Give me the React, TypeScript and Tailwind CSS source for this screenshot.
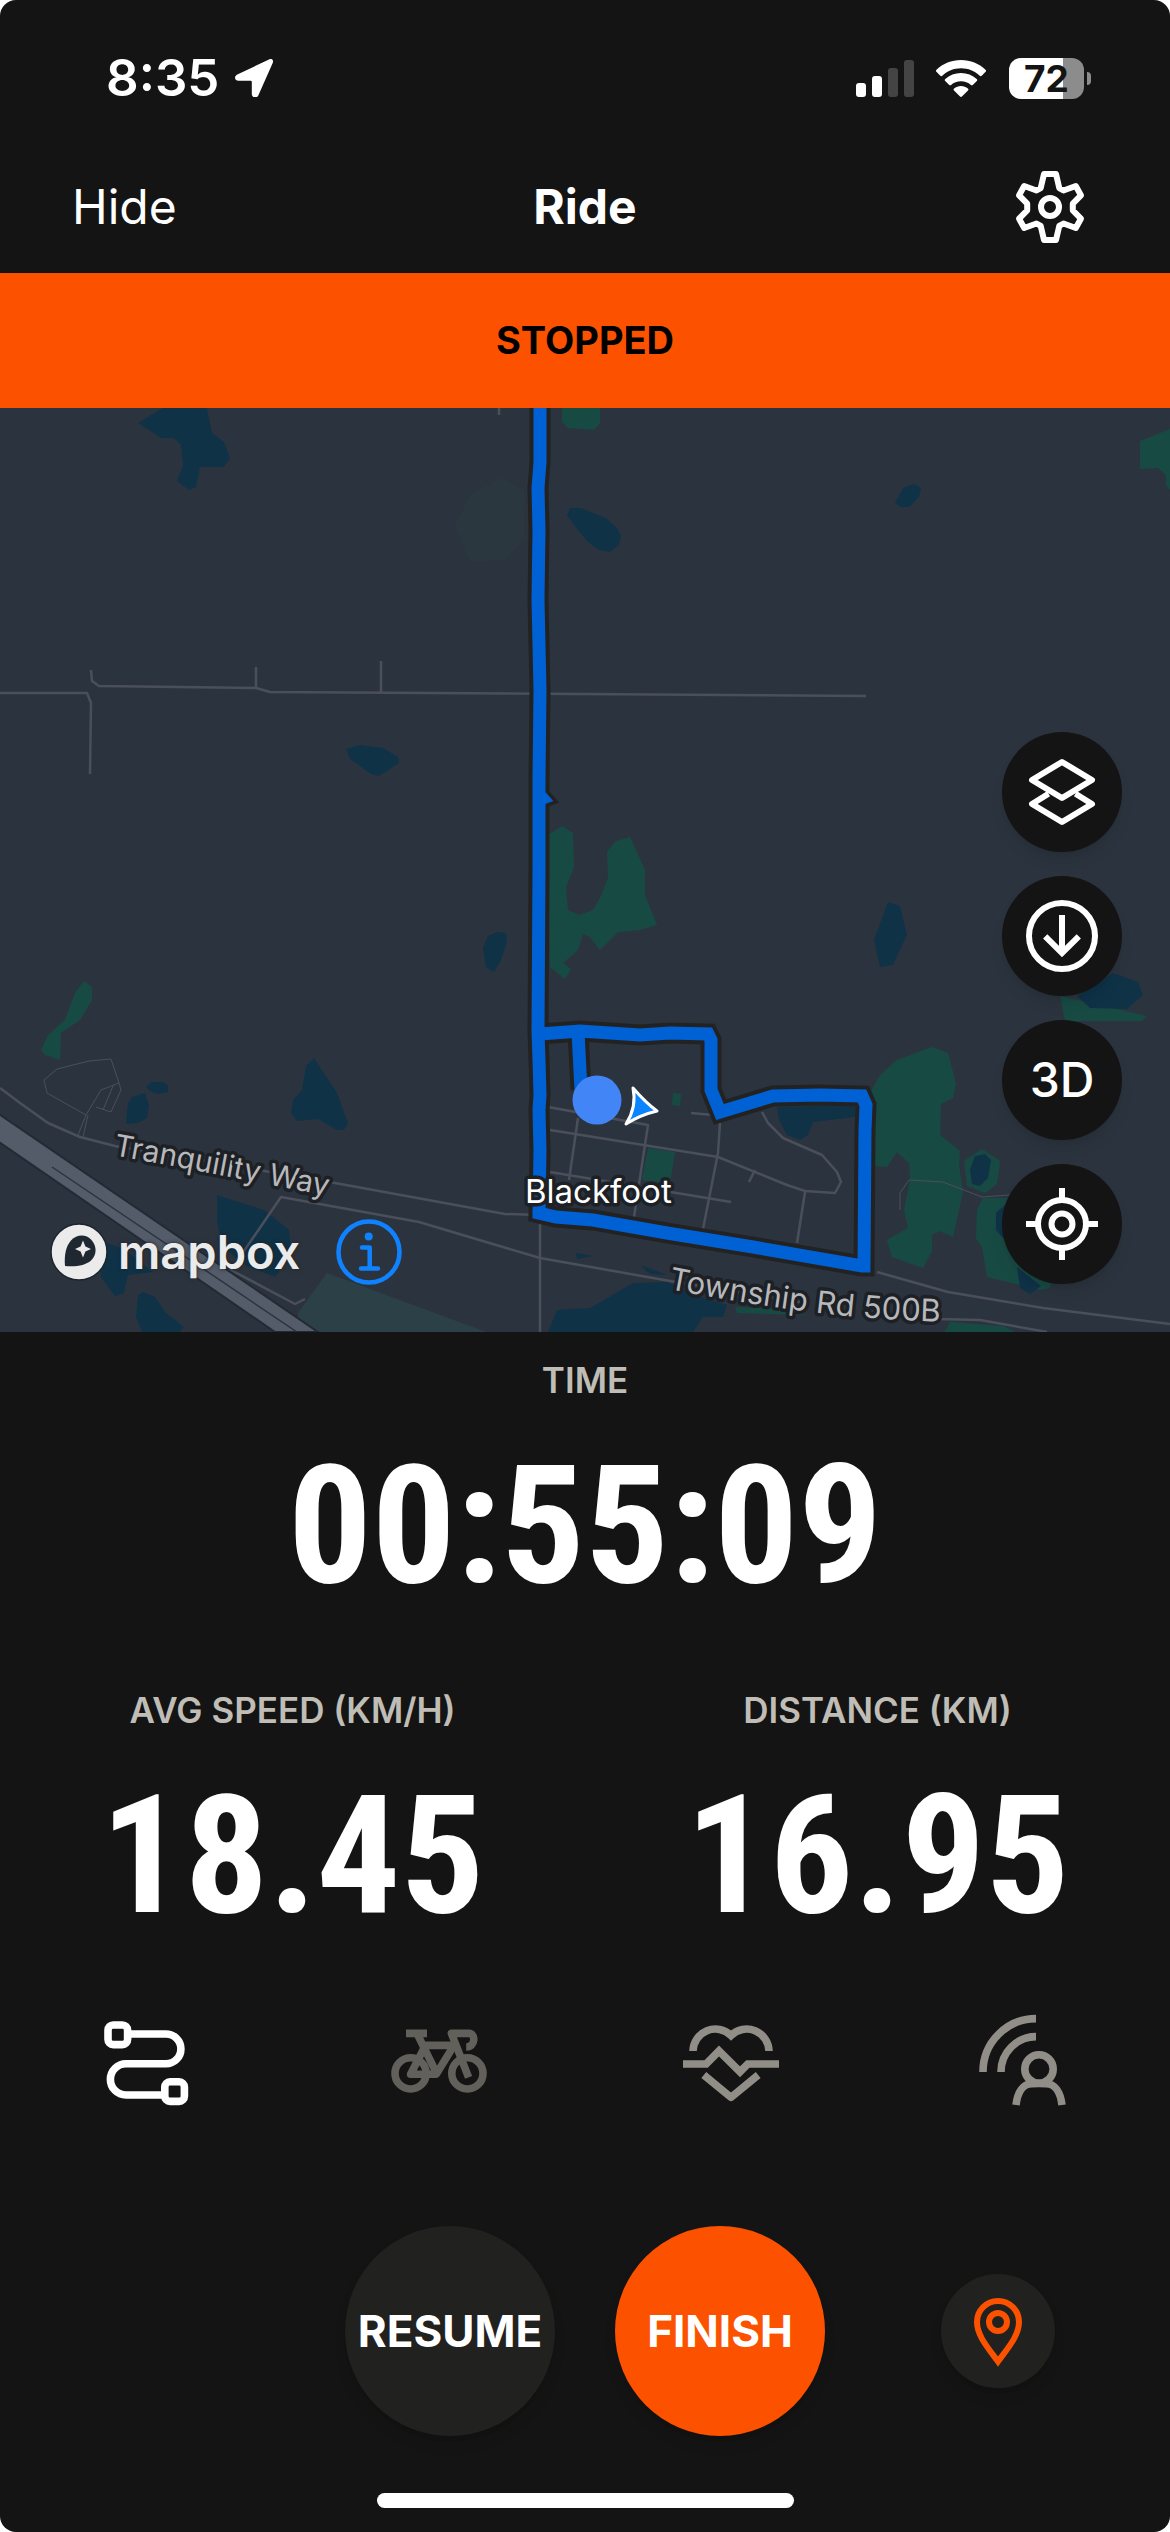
import { useState } from 'react';
import type { ReactNode } from 'react';

interface MetricProps {
  label: string;
  value: string;
}

interface Sensor {
  id: string;
  label: string;
  color: string;
  icon: ReactNode;
}

const WATER = [
  '138,423 163,408 207,408 212,433 224,442 230,458 224,467 200,467 196,487 189,490 177,481 183,465 181,445 174,438 161,438',
  '567,515 570,508 581,508 606,518 617,528 621,536 619,545 610,552 599,550 587,541 574,525',
  '895,503 903,488 914,484 921,488 919,497 909,507 901,507',
  '346,749 360,745 383,748 398,757 399,763 379,776 371,774 350,759',
  '483,948 488,936 497,932 506,933 507,942 501,960 494,972 486,967',
  '126,1124 128,1103 132,1097 145,1093 149,1105 147,1118 138,1123',
  '146,1087 151,1082 163,1082 168,1086 168,1092 158,1094 150,1091',
  '314,1058 337,1093 348,1123 344,1130 337,1130 318,1119 297,1121 291,1113 293,1100 302,1090 306,1066',
  '217,1195 264,1210 289,1230 291,1253 275,1277 245,1265 222,1247 217,1220',
  '100,1240 125,1250 153,1272 128,1275 124,1293 115,1296 101,1277',
  '138,1295 143,1292 155,1297 166,1313 184,1327 180,1332 142,1332 136,1317',
  '576,1253 593,1256 577,1259',
  '640,1265 667,1275 650,1274',
  '548,1332 557,1310 590,1308 633,1283 667,1282 700,1297 727,1305 723,1317 703,1317 693,1332',
  '777,1107 855,1105 855,1117 813,1122 808,1135 800,1140 787,1135 779,1120',
  '874,940 882,918 888,902 900,906 907,935 893,965 880,967',
];

const WOODS = [
  '562,408 600,408 600,423 594,430 568,428 562,422',
  '1140,441 1170,429 1170,490 1166,485 1166,475 1158,468 1140,469',
  '548,835 562,826 573,833 574,867 566,887 568,910 579,915 593,910 600,898 608,878 607,852 616,841 630,837 645,870 645,895 657,925 640,930 618,932 600,950 590,937 583,934 578,950 563,963 571,969 565,979 550,967',
  '84,981 92,987 92,1000 80,1020 61,1033 60,1060 45,1055 41,1050 48,1035 65,1020 75,993',
  '870,1093 880,1075 897,1060 932,1047 948,1053 956,1084 953,1098 941,1104 940,1135 960,1151 959,1165 963,1192 953,1237 940,1231 932,1235 932,1251 923,1268 892,1257 887,1240 908,1228 904,1210 910,1180 909,1163 897,1152 887,1167 875,1166',
  '964,1161 982,1149 1000,1161 997,1184 985,1193 967,1186',
  '977,1210 983,1198 1010,1198 1060,1240 1050,1288 1040,1290 987,1277 982,1247 976,1239',
  '1060,996 1147,1016 1142,1021 1065,1021',
  '735,1307 807,1310 803,1315 737,1313',
  '950,1322 1003,1326 1015,1332 945,1332',
  '648,1148 675,1152 670,1183 642,1180',
  '673,1093 681,1094 680,1106 672,1105',
];

// Lakes that sit on top of wooded areas
const PONDS = [
  '1077,996 1113,973 1138,982 1143,995 1127,1009 1090,1008',
  '970,1170 975,1156 985,1154 991,1160 988,1178 980,1186 972,1184',
  '1005,1205 996,1213 996,1230 1003,1238 1012,1238',
  '1017,1267 1041,1286 1030,1294 1020,1288',
];

const ROADS = [
  '0,693 87,693 91,703 90,774',
  '91,670 92,681 99,686 256,688 270,692 866,696',
  '256,667 256,688',
  '381,661 381,692',
  '499,408 499,415',
  '0,1088 20,1103 48,1123 80,1137 115,1146 200,1160 335,1183 505,1214 540,1215',
  '305,1299 295,1304 231,1270 281,1197 419,1222 540,1258 670,1281 800,1302',
  '540,1215 540,1332',
  '877,1272 948,1292 1043,1308 1170,1324',
  '937,1319 980,1320 1047,1332',
  '548,1107 648,1125 634,1217',
  '550,1130 718,1157 787,1185 805,1191 835,1193 841,1182 837,1172 822,1155 783,1138 768,1123 762,1112',
  '550,1172 731,1202',
  '578,1118 569,1180',
  '720,1123 718,1153 703,1229',
  '691,1113 713,1115',
  '755,1170 749,1182',
  '805,1192 797,1243',
];

const TRAILS = [
  '111,1059 89,1061 57,1069 44,1080 47,1093 86,1115 101,1090 119,1083 121,1090 111,1112 96,1107',
  '119,1083 111,1059',
  '86,1115 78,1135',
  '88,1115 83,1137',
  '113,1086 103,1110',
  '900,1210 900,1193 909,1180 943,1182 982,1197 1010,1195',
];

const TRACK =
  'M540 400 L540 462 L538 488 L539 530 L538 600 L540 690 L539 780 L539 870 L538 1032 L539 1060 L540 1095 L539 1110 L540 1150 L539 1213 L556 1217 L593 1220 L667 1233 L753 1247 L862 1266 L864 1266 L865 1130 L866 1105 L862 1096 L820 1095 L773 1096 L720 1112 L711 1090 L711 1040 L708 1034 L670 1033 L640 1035 L580 1031 L540 1034 M578 1032 L581 1090';

// GPS jitter beside the straight stretch
const JITTER = 'M541 791 L549 800 L541 803 M536 1036 L541 1034 M535 1124 L541 1126 M536 1172 L541 1170';

function StatusBar() {
  return (
    <div className="flex h-[156px] items-center justify-between pr-[79px] pl-[106px]">
      <div className="flex items-center gap-4">
        <span className="text-[51px] font-semibold">8:35</span>
        <svg className="size-[38px]" viewBox="0 0 38 38" fill="currentColor" aria-hidden="true">
          <path d="M34.500 .3 C37 -.7 38.800 1.300 37.800 3.800 L23.300 36.500 C21.700 39.600 16.800 38.800 16.800 35 V23.200 C16.800 22.100 16.300 21.700 15.300 21.700 H3.500 C-.4 21.700 -1.300 17.200 2.300 15.500 Z" />
        </svg>
      </div>
      <div className="flex items-center">
        <svg className="mr-[22px] h-[37px] w-[58px]" viewBox="0 0 58 37" aria-hidden="true">
          <rect x="0" y="23" width="10" height="14" rx="3" fill="#fff" />
          <rect x="16" y="16" width="10" height="21" rx="3" fill="#fff" />
          <rect x="32" y="8" width="10" height="29" rx="3" fill="#444" />
          <rect x="48" y="0" width="10" height="37" rx="3" fill="#444" />
        </svg>
        <svg className="mr-[23px] h-[37px] w-[50px]" viewBox="0 0 50 37" fill="#fff" aria-hidden="true">
          <path d="M25 0 C34.500 0 43 3.600 49.500 9.700 C50.200 10.400 50.200 11.200 49.600 11.800 L45.700 15.700 C45 16.300 44.300 16.300 43.700 15.700 C38.700 11 32.200 8.300 25 8.300 C17.800 8.300 11.300 11 6.300 15.700 C5.700 16.300 5 16.300 4.300 15.700 L.4 11.800 C-.2 11.200 -.2 10.400 .5 9.700 C7 3.600 15.500 0 25 0 Z" />
          <path d="M25 13 C31 13 36.500 15.200 40.700 19 C41.400 19.700 41.400 20.400 40.800 21 L37 24.800 C36.300 25.500 35.600 25.400 34.900 24.900 C32.200 22.600 28.800 21.300 25 21.300 C21.200 21.300 17.800 22.600 15.100 24.900 C14.400 25.400 13.700 25.500 13 24.800 L9.200 21 C8.600 20.400 8.600 19.700 9.300 19 C13.500 15.200 19 13 25 13 Z" />
          <path d="M25 26 C27.600 26 30 27 31.900 28.500 C32.600 29.100 32.600 29.800 32 30.400 L26.200 36.300 C25.400 37.100 24.600 37.100 23.800 36.300 L18 30.400 C17.400 29.800 17.400 29.100 18.100 28.500 C20 27 22.400 26 25 26 Z" />
        </svg>
        <div className="flex h-[41px] w-[75px] items-center justify-center rounded-xl bg-linear-to-r from-white from-72% to-[#8c8c8c] to-72%">
          <span className="text-[37px] leading-none font-bold text-[#141414]">72</span>
        </div>
        <div className="ml-[3px] h-[13px] w-1 rounded-r-full bg-[#8c8c8c]" />
      </div>
    </div>
  );
}

function GearIcon() {
  return (
    <svg
      className="size-[72px]"
      viewBox="-12 -12 24 24"
      fill="none"
      stroke="currentColor"
      strokeWidth="2"
      strokeLinejoin="round"
      aria-hidden="true"
    >
      <path d="M-2 -11 H2 L3.100 -6.300 L4.500 -5.500 L8.600 -7 L10.300 -3.900 L7.600 -1.100 V1.100 L10.300 3.900 L8.600 7 L4.500 5.500 L3.100 6.300 L2 11 H-2 L-3.100 6.300 L-4.500 5.500 L-8.600 7 L-10.300 3.900 L-7.600 1.100 V-1.100 L-10.300 -3.900 L-8.600 -7 L-4.500 -5.500 L-3.100 -6.300 Z" />
      <circle r="3" />
    </svg>
  );
}

function MapCanvas() {
  return (
    <svg
      className="block h-full w-full"
      viewBox="0 408 1170 924"
      preserveAspectRatio="xMidYMid slice"
      role="img"
      aria-label="Route map"
    >
      <defs>
        <path id="tranquility" d="M113 1155 Q217 1174 337 1198" />
        <path id="township" d="M668 1289 C758 1306 848 1320 950 1322" />
      </defs>
      <rect y="408" width="1170" height="924" fill="#2b343e" />
      <polygon points="455,525 470,495 500,478 524,490 524,540 505,560 470,562" fill="#2b373f" />
      <polygon points="298,1313 327,1273 486,1332 298,1332" fill="#2c4147" />

      {WATER.map((points) => (
        <polygon key={points} points={points} fill="#0f3247" />
      ))}
      {WOODS.map((points) => (
        <polygon key={points} points={points} fill="#184a44" />
      ))}
      {PONDS.map((points) => (
        <polygon key={points} points={points} fill="#0f3247" />
      ))}

      <g fill="none" stroke="#4a4f5b" strokeLinejoin="round">
        {ROADS.map((points) => (
          <polyline key={points} points={points} strokeWidth="2.500" />
        ))}
        {TRAILS.map((points) => (
          <polyline key={points} points={points} strokeWidth="1" />
        ))}
      </g>

      {/* Highway */}
      <polygon points="-4,1112 318,1332 275,1332 -4,1140" fill="#545c69" stroke="#232a33" strokeWidth="2" />
      <path d="M52 1167 L297 1332" stroke="#2b343e" strokeWidth="1.500" />

      {/* Recorded track */}
      <g fill="none" strokeLinejoin="miter" strokeMiterlimit="2">
        <path d={TRACK} stroke="#222" strokeWidth="21" />
        <path d={JITTER} stroke="#222" strokeWidth="12" />
        <path d={TRACK} stroke="#0061d5" strokeWidth="13" />
        <path d={JITTER} stroke="#0061d5" strokeWidth="5" />
      </g>

      <circle cx="597" cy="1100" r="24.500" fill="#4285f6" />
      <path
        d="M633 1088 Q646 1103 657 1111 Q640 1115 626 1124 Q637 1107 633 1088 Z"
        fill="#0a84ff"
        stroke="#fff"
        strokeWidth="3"
        strokeLinejoin="round"
      />

      <g stroke="#1d2025" strokeWidth="7" strokeLinejoin="round" paintOrder="stroke">
        <text x="525" y="1203" fontSize="33" fill="#fff">
          Blackfoot
        </text>
        <text fontSize="30" fill="#b7b8bb">
          <textPath href="#tranquility">Tranquility Way</textPath>
        </text>
        <text fontSize="31" fill="#b7b8bb">
          <textPath href="#township">Township Rd 500B</textPath>
        </text>
      </g>
    </svg>
  );
}

function MapButton({ label, children }: { label: string; children: ReactNode }) {
  return (
    <button
      type="button"
      aria-label={label}
      className="flex size-[120px] items-center justify-center rounded-full bg-[#141414] text-[48px] font-medium shadow-lg"
    >
      {children}
    </button>
  );
}

function MapIcon({ children }: { children: ReactNode }) {
  return (
    <svg
      className="size-[72px]"
      viewBox="-12 -12 24 24"
      fill="none"
      stroke="currentColor"
      strokeWidth="2"
      aria-hidden="true"
    >
      {children}
    </svg>
  );
}

function RideMap() {
  return (
    <section className="relative h-[924px] overflow-hidden">
      <MapCanvas />

      <div className="absolute bottom-[47px] left-[50px] flex items-center">
        <a href="#mapbox" aria-label="Mapbox" className="flex items-center gap-2.5">
          <svg className="size-[58px]" viewBox="-29 -29 58 58" aria-hidden="true">
            <circle r="28" fill="#ebebec" stroke="#1d242c" strokeWidth="1.500" />
            <path d="M-14 14 C-15 3 -13 -6 -8 -11.500 C-2 -18 7 -18 12.500 -12 C18 -6 18 3 12 8.500 C6.500 13.500 -3 15 -14 14 Z" fill="#1f2830" />
            <path d="M4 -11.500 L6.400 -5.400 L12 -3 L6.400 -.6 L4 5.500 L1.600 -.6 L-4 -3 L1.600 -5.400 Z" fill="#ebebec" />
          </svg>
          <span className="text-[47px] leading-[66px] font-semibold text-[#ebebec] [text-shadow:0_0_4px_#1d2025]">mapbox</span>
        </a>
        <button type="button" aria-label="Map information" className="ml-9">
          <svg className="size-[66px]" viewBox="-33 -33 66 66" fill="none" stroke="#0f83ff" strokeWidth="4.500" aria-hidden="true">
            <circle r="30.500" />
            <path d="M-7 -4.500 H.7 V16 M-8 16.500 H9" strokeLinecap="round" strokeLinejoin="round" />
            <circle cx="-.3" cy="-15.500" r="4" fill="#0f83ff" stroke="none" />
          </svg>
        </button>
      </div>

      <div className="absolute right-12 bottom-12 flex flex-col gap-6">
        <MapButton label="Map layers">
          <MapIcon>
            <path d="M0 -10 L10 -4 L0 2 L-10 -4 Z M-4.500 .6 L-10 4 L0 10 L10 4 L4.500 .6" strokeLinejoin="round" />
          </MapIcon>
        </MapButton>
        <MapButton label="Download map">
          <MapIcon>
            <circle r="11" />
            <path d="M0 -7 V5.500 M-5.600 .1 L0 5.700 L5.600 .1" />
          </MapIcon>
        </MapButton>
        <MapButton label="3D view">3D</MapButton>
        <MapButton label="Center on my location">
          <MapIcon>
            <circle r="8" />
            <circle r="3.500" />
            <path d="M0 -12 V-8 M0 12 V8 M-12 0 H-8 M12 0 H8" />
          </MapIcon>
        </MapButton>
      </div>
    </section>
  );
}

function Metric({ label, value }: MetricProps) {
  return (
    <div className="flex flex-col items-center gap-12">
      <dt className="text-[35px] leading-[48px] font-semibold text-[#bfbdb5]">{label}</dt>
      <dd className="font-['Roboto_Condensed','Roboto',sans-serif] text-[166px] leading-[148px] font-bold">{value}</dd>
    </div>
  );
}

const sensors: Sensor[] = [
  {
    id: 'route',
    label: 'Routes',
    color: 'text-white',
    icon: (
      <>
        <rect x="-9.500" y="-9.500" width="4.900" height="4.900" rx="1.300" />
        <rect x="4.700" y="4.700" width="4.900" height="4.900" rx="1.300" />
        <path d="M-4.500 -7.250 H5 A3.700 3.700 0 0 1 5 .2 H-5 A3.900 3.900 0 0 0 -5 8 H4.500" />
      </>
    ),
  },
  {
    id: 'sport',
    label: 'Sport',
    color: 'text-[#62605a]',
    icon: (
      <>
        <circle cx="-7.100" cy="2.600" r="3.900" />
        <circle cx="7.100" cy="2.600" r="3.900" />
        <path d="M-8.250 -7.400 H-3 M-5.300 -7 L-.5 2.800 M-4 -4.400 H4 M3.600 -4.200 L-.7 2.800 H-7.100 L-3.600 -4" strokeLinejoin="round" />
        <path d="M7.400 3.600 L3.100 -7.400 H7.500 C9.200 -7.400 9.200 -4 6.800 -4" strokeLinejoin="round" />
      </>
    ),
  },
  {
    id: 'heart',
    label: 'Heart rate',
    color: 'text-[#918e88]',
    icon: (
      <>
        <path d="M-9.500 -3 A5.600 5.600 0 0 1 0 -6.900 A5.600 5.600 0 0 1 9.500 -3" />
        <path d="M-12 .25 H-6.200 L-3 -3 L2.250 2.200 L4.200 .25 H12" />
        <path d="M-6.800 3 L0 8.600 L6.800 3" strokeLinejoin="round" />
      </>
    ),
  },
  {
    id: 'beacon',
    label: 'Beacon',
    color: 'text-[#918e88]',
    icon: (
      <>
        <path d="M3 -11.100 A13.300 13.300 0 0 0 -10.250 2.250 M3 -6.600 A8.800 8.800 0 0 0 -5.750 2.250" />
        <circle cx="3.750" cy="1.500" r="3.550" />
        <path d="M-2 10.500 C-1.600 7.200 -.2 5.200 2 5.200 C3.200 5.050 4.300 5.050 5.500 5.200 C7.700 5.200 9.100 7.200 9.500 10.500" />
      </>
    ),
  },
];

export default function App() {
  const [paused, setPaused] = useState(true);

  return (
    <main className="min-h-screen overflow-hidden rounded-2xl bg-[#141414] font-['Inter',sans-serif] text-white">
      <header className="pb-[15px]">
        <StatusBar />
        <nav className="grid h-[102px] grid-cols-3 items-center px-[72px] text-[48px]">
          <button type="button" className="justify-self-start">Hide</button>
          <h1 className="justify-self-center font-bold">Ride</h1>
          <button type="button" aria-label="Settings" className="mr-3 justify-self-end">
            <GearIcon />
          </button>
        </nav>
      </header>

      <div role="status" className="flex h-[135px] items-center justify-center bg-[#fc5200] text-[38px] font-bold text-black">
        {paused ? 'STOPPED' : 'RECORDING'}
      </div>

      <RideMap />

      <dl className="pt-6">
        <Metric label="TIME" value="00:55:09" />
        <div className="mt-[86px] grid grid-cols-2">
          <Metric label="AVG SPEED (KM/H)" value="18.45" />
          <Metric label="DISTANCE (KM)" value="16.95" />
        </div>
      </dl>

      <div className="mt-[85px] grid grid-cols-4 justify-items-center">
        {sensors.map((sensor) => (
          <button key={sensor.id} type="button" aria-label={sensor.label} className={sensor.color}>
            <svg
              className="size-24 overflow-visible"
              viewBox="-12 -12 24 24"
              fill="none"
              stroke="currentColor"
              strokeWidth="1.900"
              aria-hidden="true"
            >
              {sensor.icon}
            </svg>
          </button>
        ))}
      </div>

      <div className="mt-[115px] grid grid-cols-[1fr_auto_1fr] items-center">
        <div className="col-start-2 flex gap-[60px] text-[44px] font-bold">
          <button
            type="button"
            onClick={() => setPaused(!paused)}
            className="flex size-[210px] items-center justify-center rounded-full bg-[#21211f] shadow-lg"
          >
            {paused ? 'RESUME' : 'STOP'}
          </button>
          <button type="button" className="flex size-[210px] items-center justify-center rounded-full bg-[#fc5200] shadow-lg">
            FINISH
          </button>
        </div>
        <button
          type="button"
          aria-label="Drop a pin"
          className="flex size-[114px] items-center justify-center justify-self-center rounded-full bg-[#21211f] text-[#fc5200] shadow-lg"
        >
          <MapIcon>
            <path d="M0 10.200 C-3 6 -7 1.700 -7 -3 A7 7 0 0 1 7 -3 C7 1.700 3 6 0 10.200 Z" />
            <circle cy="-3" r="3" />
          </MapIcon>
        </button>
      </div>

      <div className="mx-auto mt-[57px] mb-6 h-[15px] w-[417px] rounded-full bg-white" />
    </main>
  );
}
